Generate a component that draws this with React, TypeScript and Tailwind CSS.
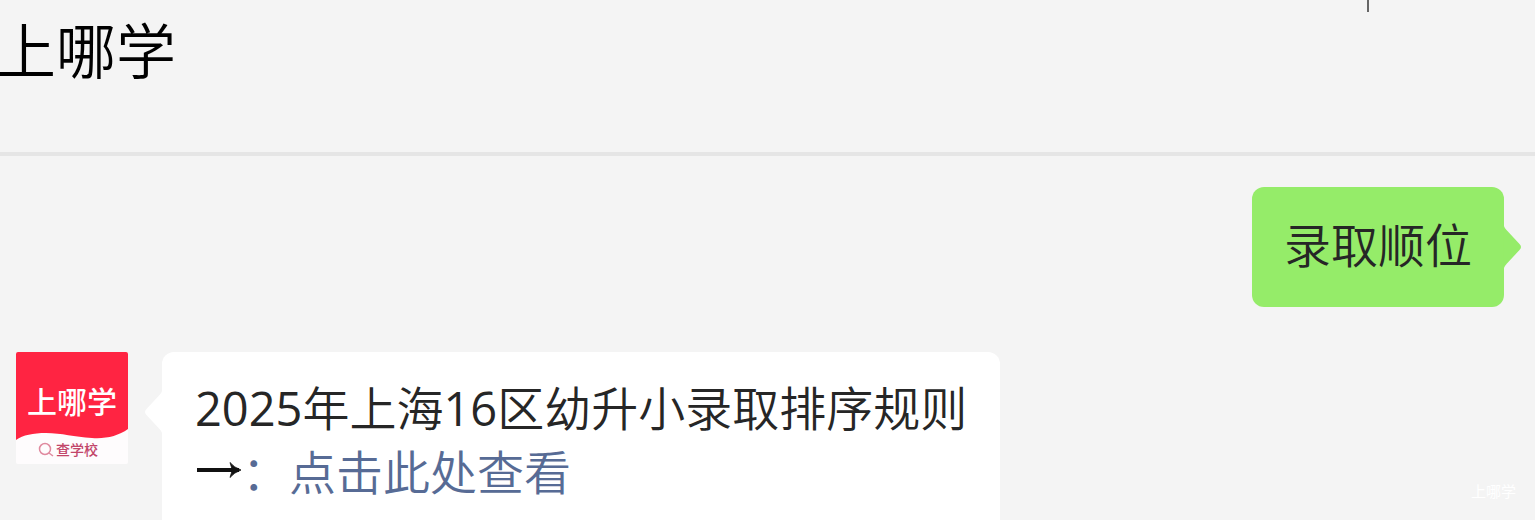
import React from "react";

function Avatar() {
  return (
    <svg
      viewBox="0 0 112 112"
      role="img"
      aria-label="上哪学 查学校"
      className="h-28 w-28 shrink-0"
    >
      <rect width="112" height="112" rx="2" fill="#fefcfd" />
      <path d="M0 2Q0 0 2 0H110Q112 0 112 2V77C102 84 90 87 76 86C58 85 46 81 30 81C17 81 7 83 0 88Z" fill="#ff2442" />
      <text
        x="56"
        y="61"
        textAnchor="middle"
        fontSize="30"
        fontWeight="500"
        fill="#fff"
        fontFamily="'Noto Sans CJK SC', sans-serif"
      >
        上哪学
      </text>
      <g fill="none" stroke="#e08a9f" strokeWidth="1.5">
        <circle cx="29" cy="97" r="5.5" />
        <path d="M33 101L37 104" />
      </g>
      <text
        x="40"
        y="103"
        fontSize="14"
        fontWeight="500"
        fill="#c2466a"
        fontFamily="'Noto Sans CJK SC', sans-serif"
      >
        查学校
      </text>
    </svg>
  );
}

function Arrow() {
  return (
    <svg viewBox="0 0 47 20" role="img" aria-label="→" className="inline-block h-5 w-[47px] align-[10px]">
      <path d="M2 10H44" fill="none" stroke="#111" strokeWidth="4" />
      <path d="M35 2.5Q39 7.5 46 10Q39 12.5 35 17.5L37 11V9Z" fill="#111" stroke="#111" strokeWidth="0.8" />
    </svg>
  );
}

export default function App() {
  return (
    <div className="relative flex h-screen flex-col overflow-hidden bg-[#f4f4f4] font-['Open_Sans','Noto_Sans_CJK_SC',sans-serif] text-[#262626]">
      <header className="flex h-39 shrink-0 items-start justify-between border-b-4 border-[#e5e5e5]">
        <h1 className="-ml-1 pt-1 font-['Noto_Sans_CJK_SC',sans-serif] text-6xl leading-[88px] font-[350] text-black">
          上哪学
        </h1>
        <div className="mr-[166px] h-3 w-0.5 bg-[#666]" />
      </header>

      <main className="flex flex-col gap-[45px] pt-[31px] text-[47px] leading-[64px] font-[350]">
        <div className="flex justify-end pr-[13px]">
          <p className="rounded-xl bg-[#95ec69] px-8 pt-[26px] pb-[30px]">录取顺位</p>
          <svg viewBox="0 0 18 44" aria-hidden="true" className="-ml-px h-11 w-[19px] shrink-0 self-center">
            <path d="M0 0Q1 3 3 5L16 19Q19 22 16 25L3 39Q1 41 0 44Z" fill="#95ec69" />
          </svg>
        </div>

        <div className="flex items-start pl-4">
          <Avatar />
          <svg viewBox="0 0 18 44" aria-hidden="true" className="mt-[38px] -mr-px ml-4 h-11 w-[19px] shrink-0">
            <path d="M18 0Q17 3 15 5L2 19Q-1 22 2 25L15 39Q17 41 18 44Z" fill="#fff" />
          </svg>
          <p className="rounded-xl bg-white px-[33px] pt-6 pb-7">
            <span className="font-normal">2025</span>年上海<span className="font-normal">16</span>区幼升小录取排序规则
            <br />
            <Arrow />
            <a href="#rules" className="text-[#576b95]">：点击此处查看</a>
          </p>
        </div>
      </main>

      <div className="absolute right-[19px] bottom-[19px] font-['Noto_Sans_CJK_SC',sans-serif] text-[15px] leading-5 text-white">
        上哪学
      </div>
    </div>
  );
}
